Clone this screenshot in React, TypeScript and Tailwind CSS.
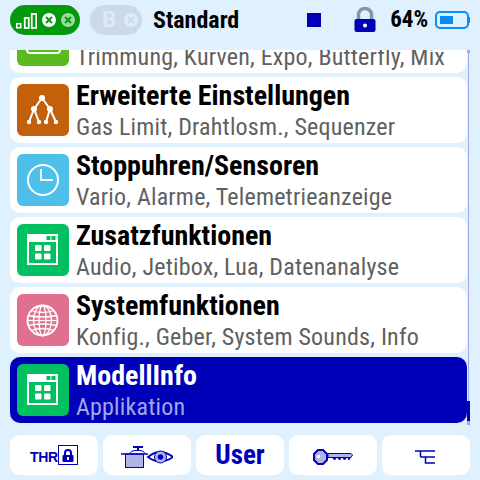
import React from "react";

function Tile({color, children}: {color: string; children: React.ReactNode}) {
    return (
        <div className={"w-[52px] h-[52px] rounded-[6px] shrink-0 flex items-center justify-center " + color}>
            {children}
        </div>
    );
}

function TreeIcon() {
    return (
        <svg width="52" height="52" viewBox="0 0 52 52" fill="none" stroke="white" strokeWidth="2">
            <path d="M25 14 L17 25 M25 14 L33 25 M17 25 L12 38 M17 25 L22 38 M33 25 L29 38 M33 25 L39 38"/>
            <g fill="white" stroke="none">
                <circle cx="25" cy="14" r="3"/>
                <circle cx="17" cy="25" r="3"/>
                <circle cx="33" cy="25" r="3"/>
                <circle cx="12" cy="38" r="2.200"/>
                <circle cx="22" cy="38" r="2.200"/>
                <circle cx="29" cy="38" r="2.200"/>
                <circle cx="39" cy="38" r="2.200"/>
            </g>
        </svg>
    );
}

function ClockIcon() {
    return (
        <svg width="52" height="52" viewBox="0 0 52 52" fill="none" stroke="white" strokeWidth="2">
            <circle cx="26" cy="26" r="15"/>
            <path d="M24 15 V26 H36"/>
        </svg>
    );
}

function AppIcon() {
    return (
        <svg width="52" height="52" viewBox="0 0 52 52">
            <path fill="white" fillRule="evenodd" d="M10 10 H41 V41 H10 Z M12 18 V39 H39 V18 Z"/>
            <rect x="29.500" y="12" width="4" height="4" fill="#00c060"/>
            <rect x="34.500" y="12" width="4" height="4" fill="#00c060"/>
            <rect x="18" y="21" width="6.500" height="6" fill="white" rx="1"/>
            <rect x="27" y="21" width="6.500" height="6" fill="white" rx="1"/>
            <rect x="18" y="29.500" width="6.500" height="6" fill="white" rx="1"/>
            <rect x="27" y="29.500" width="6.500" height="6" fill="white" rx="1"/>
        </svg>
    );
}

function GlobeIcon() {
    return (
        <svg width="52" height="52" viewBox="0 0 52 52" fill="none" stroke="white" strokeWidth="1.300">
            <circle cx="25.500" cy="26.500" r="15" strokeWidth="1.800"/>
            <ellipse cx="25.500" cy="26.500" rx="9" ry="15"/>
            <ellipse cx="25.500" cy="26.500" rx="3.500" ry="15"/>
            <path d="M10.500 26.500 H40.500"/>
            <path d="M14 16.500 Q25.500 20.500 37 16.500 M11 21.500 Q25.500 24.500 40 21.500 M11 31.500 Q25.500 28.500 40 31.500 M14 36.500 Q25.500 32.500 37 36.500"/>
        </svg>
    );
}

function MixIcon() {
    return (
        <svg width="52" height="52" viewBox="0 0 52 52" fill="none" stroke="white" strokeWidth="2">
            <path d="M10 28 V36 Q10 39 13 39 H40 Q43 39 43 36 V28"/>
        </svg>
    );
}

function Row({icon, title, sub, active}: {icon: React.ReactNode; title: string; sub: string; active?: boolean}) {
    return (
        <div className={"h-[66px] shrink-0 rounded-[10px] pl-[7px] flex items-center gap-[7px] " + (active ? "bg-[#0000b8]" : "bg-white")}>
            {icon}
            <div className="flex flex-col whitespace-nowrap [font-stretch:75%]">
                <span className={"text-[28px] leading-[34px] font-bold " + (active ? "text-white" : "text-black")}>{title}</span>
                <span className={"text-[24px] leading-[28px] tracking-[0.2px] " + (active ? "text-[#a0a8e8]" : "text-[#606060]")}>{sub}</span>
            </div>
        </div>
    );
}

function ToolButton({children}: {children: React.ReactNode}) {
    return (
        <div className="w-[88px] h-10 bg-white rounded-[9px] flex items-center justify-center">
            {children}
        </div>
    );
}

function Dot({fill, cross}: {fill: string; cross: string}) {
    return (
        <svg width="14" height="14" viewBox="0 0 14 14" className="shrink-0">
            <circle cx="7" cy="7" r="7" fill={fill}/>
            <path d="M4 4 L10 10 M10 4 L4 10" stroke={cross} strokeWidth="2"/>
        </svg>
    );
}

export default function App() {
    return (
        <div className="relative w-[480px] h-[480px] bg-[#dff0ff] overflow-hidden font-['Roboto',sans-serif]">
            {/* top bar */}
            <div className="h-[50px] flex items-center pl-[10px] pb-[10px]">
                <div className="w-[70px] h-[30px] shrink-0 rounded-full bg-[#059a0c] flex items-center pl-[6px] gap-[5px]">
                    <svg width="21" height="16" viewBox="0 0 21 16" fill="none" stroke="white" className="shrink-0 mt-[1px]">
                        <rect x="0.750" y="10.750" width="4" height="4" strokeWidth="1.500"/>
                        <rect x="8.750" y="5" width="4" height="10" strokeWidth="1.800"/>
                        <rect x="15.750" y="1" width="4.500" height="14" strokeWidth="1.800"/>
                    </svg>
                    <Dot fill="white" cross="#059a0c"/>
                    <Dot fill="#a0d8a4" cross="#059a0c"/>
                </div>
                <div className="ml-[10px] w-[52px] h-[30px] shrink-0 rounded-full bg-[#cadaea] flex items-center pl-[12px] gap-[8px]">
                    <span className="text-[22px] font-bold text-[#dfeaf5] leading-[30px]">B</span>
                    <Dot fill="#dfeaf5" cross="#cadaea"/>
                </div>
                <span className="ml-[11px] text-[24px] font-bold text-black [font-stretch:75%]">Standard</span>
                <div className="ml-[68px] w-[14px] h-[14px] bg-[#0000b8]"/>
                <svg width="22" height="26" viewBox="0 0 22 26" className="ml-[33px]">
                    <path d="M4.500 13 V7.500 a6.500 6 0 0 1 13 0 V13" fill="none" stroke="#8494a4" strokeWidth="3.500"/>
                    <rect x="0.500" y="12" width="21" height="13" rx="2" fill="#0000b8"/>
                    <circle cx="11" cy="18.500" r="2" fill="white"/>
                </svg>
                <span className="ml-[14px] text-[23px] font-bold text-black [font-stretch:75%]">64%</span>
                <svg width="36" height="18" viewBox="0 0 36 18" className="ml-[7px]">
                    <rect x="1" y="1" width="32" height="16" rx="4" fill="none" stroke="#0a8cf5" strokeWidth="2"/>
                    <rect x="33" y="6" width="2" height="6" fill="#0a8cf5"/>
                    <rect x="5" y="5" width="13" height="8" fill="#0a8cf5"/>
                </svg>
            </div>

            {/* menu list, scrolled so the first row is cut off */}
            <div className="h-[375px] ml-[10px] w-[457px] overflow-hidden flex flex-col justify-end gap-1 pb-[2px]">
                <Row icon={<Tile color="bg-[#5bbb1e]"><MixIcon/></Tile>} title="Mischer" sub="Trimmung, Kurven, Expo, Butterfly, Mix"/>
                <Row icon={<Tile color="bg-[#c2600c]"><TreeIcon/></Tile>} title="Erweiterte Einstellungen" sub="Gas Limit, Drahtlosm., Sequenzer"/>
                <Row icon={<Tile color="bg-[#4dbfe8]"><ClockIcon/></Tile>} title="Stoppuhren/Sensoren" sub="Vario, Alarme, Telemetrieanzeige"/>
                <Row icon={<Tile color="bg-[#00c060]"><AppIcon/></Tile>} title="Zusatzfunktionen" sub="Audio, Jetibox, Lua, Datenanalyse"/>
                <Row icon={<Tile color="bg-[#e07090]"><GlobeIcon/></Tile>} title="Systemfunktionen" sub="Konfig., Geber, System Sounds, Info"/>
                <Row active icon={<Tile color="bg-[#00c060]"><AppIcon/></Tile>} title="ModellInfo" sub="Applikation"/>
            </div>

            {/* scrollbar */}
            <div className="absolute left-[468px] top-[50px] w-px h-[375px] bg-[#a0a8e8]"/>
            <div className="absolute left-[467px] top-[50px] w-[3px] h-[3px] bg-[#a0a8e8]"/>
            <div className="absolute left-[467px] top-[401px] w-[3px] h-[20px] bg-[#0000b8]"/>
            <div className="absolute left-[467px] top-[421px] w-[3px] h-[4px] bg-[#a0a8e8]"/>

            {/* bottom toolbar */}
            <div className="mt-[10px] ml-[10px] flex gap-[5px] text-[#0000b8]">
                <ToolButton>
                    <span className="text-[14px] font-bold font-['Liberation_Sans',sans-serif] tracking-[-0.3px] leading-[20px] mt-[4px]">THR</span>
                    <div className="w-5 h-5 border border-[#0000b8] flex items-center justify-center">
                        <svg width="12" height="13" viewBox="0 0 12 13">
                            <path d="M3 6 V4 a3 3 0 0 1 6 0 V6" fill="none" stroke="#0000b8" strokeWidth="2"/>
                            <rect x="0.500" y="6" width="11" height="7" rx="1" fill="#0000b8"/>
                            <rect x="5" y="8" width="2" height="3" fill="white"/>
                        </svg>
                    </div>
                </ToolButton>
                <ToolButton>
                    <svg width="52" height="22" viewBox="0 0 52 22" className="mt-[4px]">
                        <path d="M12 1 H22 M17 1 V5" stroke="#0000b8" strokeWidth="2"/>
                        <path d="M9 7.500 Q10 4.500 14 4.500 H19 Q23 4.500 24 7.500" fill="white" stroke="#0000b8"/>
                        <rect x="4.500" y="8" width="18" height="13.500" fill="#b0b4e8" stroke="#0000b8"/>
                        <path d="M0 8 H27" stroke="#0000b8" strokeWidth="1.500"/>
                        <path d="M27 11 Q39 1 52 11 Q39 20 27 11 Z" fill="white" stroke="#0000b8" strokeWidth="1.800"/>
                        <circle cx="39.500" cy="11" r="6" fill="#b0b4e8" stroke="#0000b8"/>
                        <circle cx="39.500" cy="11" r="2.800" fill="#0000b8"/>
                    </svg>
                </ToolButton>
                <ToolButton>
                    <span className="text-[27px] font-bold [font-stretch:75%]">User</span>
                </ToolButton>
                <ToolButton>
                    <svg width="40" height="16" viewBox="0 0 40 16" className="mt-[4px]">
                        <path d="M5 1 H10 L14 5 V11 L10 15 H5 L1 11 V5 Z" fill="#b0b4e8" stroke="#0000b8" strokeWidth="2"/>
                        <rect x="4" y="6" width="3" height="3" fill="white"/>
                        <path d="M15 4.500 H38 L39.500 6 L38 8.500 H15 Z" fill="#b0b4e8" stroke="#0000b8"/>
                        <path d="M20 9 l1.500 2 l1.500 -2 M25 9 l1.500 2 l1.500 -2 M30 9 l1.500 2 l1.500 -2 M35 9 l1 2 l1 -2" fill="#0000b8" stroke="#0000b8"/>
                    </svg>
                </ToolButton>
                <ToolButton>
                    <svg width="22" height="16" viewBox="0 0 22 16" fill="none" stroke="#0000b8" strokeWidth="1.500" className="mt-[2px] -ml-[1px]">
                        <path d="M0 3 H20 M5.500 3 V9"/>
                        <path d="M5.500 9 H20 M10.500 9 V15 H20"/>
                    </svg>
                </ToolButton>
            </div>
        </div>
    );
}
